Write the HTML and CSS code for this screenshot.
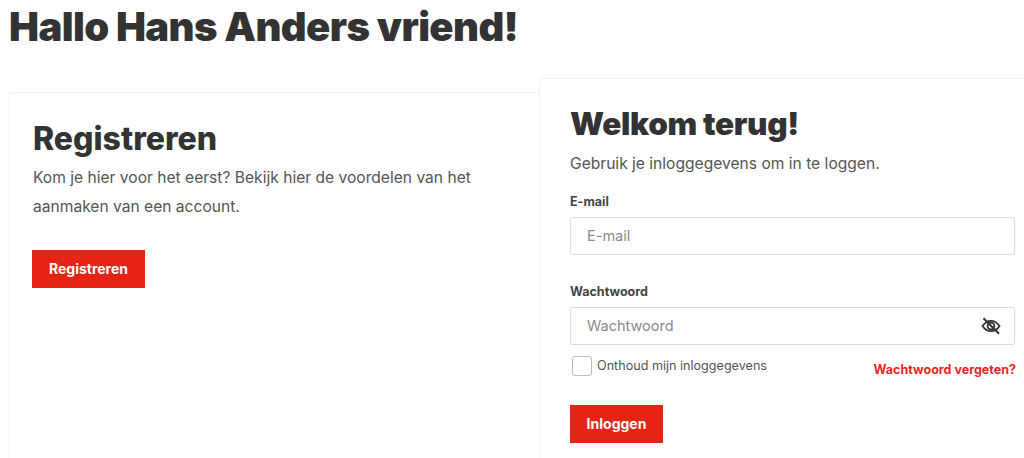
FILE: index.html
```html
<!DOCTYPE html>
<html lang="nl">
<head>
<meta charset="utf-8">
<title>Inloggen</title>
<link rel="stylesheet" href="styles.css">
</head>
<body>
<h1 class="page-title">Hallo Hans Anders vriend!</h1>
<main class="panels">
  <section class="card card-register">
    <h2 class="card-title">Registreren</h2>
    <p class="intro intro-register">Kom je hier voor het eerst? Bekijk hier de voordelen van het aanmaken van een account.</p>
    <a class="btn btn-register" href="#">Registreren</a>
  </section>
  <section class="card card-login">
    <h2 class="card-title card-title-login">Welkom terug!</h2>
    <p class="intro intro-login">Gebruik je inloggegevens om in te loggen.</p>
    <form class="form">
      <label class="label" for="email">E-mail</label>
      <input class="input" id="email" type="text" placeholder="E-mail">
      <label class="label label-pass" for="pass">Wachtwoord</label>
      <div class="pass-wrap">
        <input class="input" id="pass" type="text" placeholder="Wachtwoord">
        <svg class="eye" viewBox="0 0 20 20" width="20" height="20" fill="none" stroke="#333" stroke-width="1.800" aria-hidden="true">
          <path d="M1.500 10C4 6.200 7 4.800 10 4.800S16 6.200 18.500 10C16 13.800 13 15.200 10 15.200S4 13.800 1.500 10Z"/>
          <circle cx="10" cy="10" r="3.400"/>
          <path d="M2.500 2.200L18 17.800" stroke-width="2"/>
        </svg>
      </div>
      <div class="options">
        <label class="remember"><span class="box"></span><span class="remember-text">Onthoud mijn inloggegevens</span></label>
        <a class="forgot" href="#">Wachtwoord vergeten?</a>
      </div>
      <button class="btn btn-login" type="button">Inloggen</button>
    </form>
  </section>
</main>
</body>
</html>
```
FILE: styles.css
```css
html, body {
  margin: 0;
  height: 458px;
  overflow: hidden;
  background: #fff;
}
body {
  font-family: Inter, "Noto Sans", sans-serif;
  color: #333;
}
.page-title {
  margin: 0;
  padding: 3px 0 0 9px;
  height: 78px;
  box-sizing: border-box;
  font-size: 40px;
  line-height: 48px;
  font-weight: 900;
  letter-spacing: -0.6px;
  color: #333;
}
.panels {
  display: flex;
  align-items: flex-start;
  padding-left: 9px;
}
.card {
  box-sizing: border-box;
  flex: none;
  background: #fff;
  border: 1px solid #f2f2f2;
  border-bottom: 0;
}
.card-register {
  width: 531px;
  height: 366px;
  margin-top: 14px;
  padding: 28px 23px;
  border-right: 0;
}
.card-login {
  width: 495px;
  height: 380px;
  margin-left: -1px;
  padding: 24px 8px 0 30px;
}
.card-title {
  margin: 0;
  font-size: 32px;
  line-height: 36px;
  font-weight: 800;
  color: #333;
}
.card-title-login {
  font-size: 31.500px;
  line-height: 42px;
  font-weight: 900;
  letter-spacing: -0.3px;
}
.intro {
  margin: 0;
  font-size: 15.600px;
  color: #555;
}
.intro-register {
  margin-top: 6px;
  line-height: 29px;
  width: 460px;
}
.intro-login {
  margin-top: 7px;
  line-height: 24px;
}
.btn {
  display: block;
  box-sizing: border-box;
  height: 38px;
  line-height: 38px;
  background: #e62314;
  color: #fff;
  font-family: inherit;
  font-size: 14px;
  font-weight: 700;
  text-align: center;
  text-decoration: none;
  border: 0;
  padding: 0;
}
.btn-register {
  width: 113px;
  margin-top: 29px;
  margin-left: -1px;
}
.btn-login {
  width: 93px;
  margin-top: 27px;
}
.form {
  display: flex;
  flex-direction: column;
  width: 445px;
  margin-top: 18px;
}
.label {
  font-size: 12.500px;
  line-height: 16px;
  font-weight: 700;
  color: #444;
}
.label-pass {
  margin-top: 29px;
}
.input {
  display: block;
  box-sizing: border-box;
  width: 445px;
  height: 38px;
  margin-top: 7px;
  padding: 0 16px 2px;
  border: 1px solid #dedede;
  border-radius: 2px;
  background: #fff;
  font-family: inherit;
  font-size: 14.500px;
  color: #333;
}
.input::placeholder {
  color: #8a8a8a;
  opacity: 1;
}
.pass-wrap {
  position: relative;
}
.eye {
  position: absolute;
  right: 14px;
  top: 16px;
}
.options {
  display: flex;
  justify-content: space-between;
  margin-top: 11px;
}
.remember {
  display: flex;
  gap: 5px;
  margin-left: 2px;
  font-size: 12.600px;
  line-height: 16px;
  color: #555;
}
.remember-text {
  padding-top: 2px;
}
.box {
  box-sizing: border-box;
  width: 20px;
  height: 20px;
  border: 1px solid #bdbdbd;
  border-radius: 3px;
}
.forgot {
  margin-top: 6px;
  margin-right: -1px;
  font-size: 12.500px;
  line-height: 16px;
  font-weight: 700;
  color: #ec2626;
  text-decoration: none;
}
```
